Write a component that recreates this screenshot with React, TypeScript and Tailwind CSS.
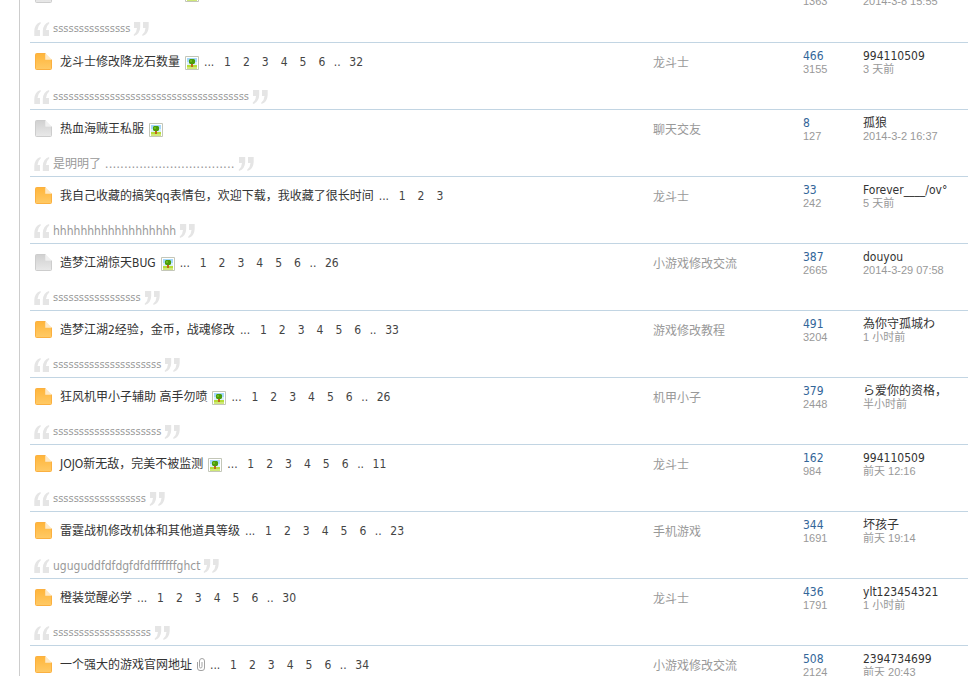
import React from "react";

type Thread = {
  title: string;
  isNew?: boolean;
  attachment?: "image" | "file";
  pages?: number[];
  excerpt: string;
  forum: string;
  replies: string;
  views: string;
  author: string;
  time: string;
};

const s = (count: number) => "s".repeat(count);
const upTo = (last: number) => [1, 2, 3, 4, 5, 6, last];

const threads: Thread[] = [
  { title: "", attachment: "image", excerpt: s(15), forum: "龙斗士", replies: "", views: "1363", author: "", time: "2014-3-8 15:55" },
  { title: "龙斗士修改降龙石数量", isNew: true, attachment: "image", pages: upTo(32), excerpt: s(38), forum: "龙斗士", replies: "466", views: "3155", author: "994110509", time: "3 天前" },
  { title: "热血海贼王私服", attachment: "image", excerpt: "是明明了 " + ".".repeat(34), forum: "聊天交友", replies: "8", views: "127", author: "孤狼", time: "2014-3-2 16:37" },
  { title: "我自己收藏的搞笑qq表情包，欢迎下载，我收藏了很长时间", isNew: true, pages: [1, 2, 3], excerpt: "hhhhhhhhhhhhhhhhhh", forum: "龙斗士", replies: "33", views: "242", author: "Forever____/ov°", time: "5 天前" },
  { title: "造梦江湖惊天BUG", attachment: "image", pages: upTo(26), excerpt: s(17), forum: "小游戏修改交流", replies: "387", views: "2665", author: "douyou", time: "2014-3-29 07:58" },
  { title: "造梦江湖2经验，金币，战魂修改", isNew: true, pages: upTo(33), excerpt: s(21), forum: "游戏修改教程", replies: "491", views: "3204", author: "為你守孤城わ", time: "1 小时前" },
  { title: "狂风机甲小子辅助 高手勿喷", isNew: true, attachment: "image", pages: upTo(26), excerpt: s(21), forum: "机甲小子", replies: "379", views: "2448", author: "ら爱你的资格，", time: "半小时前" },
  { title: "JOJO新无敌，完美不被监测", isNew: true, attachment: "image", pages: upTo(11), excerpt: s(18), forum: "龙斗士", replies: "162", views: "984", author: "994110509", time: "前天 12:16" },
  { title: "雷霆战机修改机体和其他道具等级", isNew: true, pages: upTo(23), excerpt: "uguguddfdfdgfdfdfffffffghct", forum: "手机游戏", replies: "344", views: "1691", author: "坏孩子", time: "前天 19:14" },
  { title: "橙装觉醒必学", isNew: true, pages: upTo(30), excerpt: s(19), forum: "龙斗士", replies: "436", views: "1791", author: "ylt123454321", time: "1 小时前" },
  { title: "一个强大的游戏官网地址", isNew: true, attachment: "file", pages: upTo(34), excerpt: "", forum: "小游戏修改交流", replies: "508", views: "2124", author: "2394734699", time: "前天 20:43" },
];

function PageIcon({ isNew }: { isNew?: boolean }) {
  const id = isNew ? "sheet-new" : "sheet-old";
  const [top, bottom, edge, fold] = isNew
    ? ["#ffb53a", "#ffca66", "#fbb040", "#ffe9c4"]
    : ["#d0d0d0", "#e9e9e9", "#cdcdcd", "#f0f0f0"];
  return (
    <svg className="h-[17px] w-[17px] shrink-0" viewBox="0 0 17 17" aria-hidden="true">
      <defs>
        <linearGradient id={id} x1="0" y1="0" x2="0" y2="1">
          <stop offset="0" stopColor={top} />
          <stop offset="1" stopColor={bottom} />
        </linearGradient>
      </defs>
      <path d="M1.5 .5H10.5V6.5H16.5V15.5Q16.5 16.5 15.5 16.5H1.5Q.5 16.5 .5 15.5V1.5Q.5 .5 1.5 .5Z" fill={`url(#${id})`} stroke={edge} />
      <path d="M10.5 .5L16.5 6.5H10.5Z" fill={fold} stroke={fold} strokeWidth=".6" />
    </svg>
  );
}

function ImageIcon() {
  return (
    <svg className="h-[14px] w-[14px] shrink-0" viewBox="0 0 14 14" role="img" aria-label="图片附件">
      <path d="M.5 .5H13.5V13.5H.5Z" fill="#fff" stroke="#c3c6b8" />
      <path d="M2 2H12V9H2Z" fill="#a4d8fb" />
      <path d="M2 6H12V9H2Z" fill="#d9f0fb" />
      <path d="M2 9H12V12H2Z" fill="#b5dd36" />
      <path d="M2 11H12V13H2Z" fill="#cfe878" />
      <path d="M6 7H8V11H6Z" fill="#c0661a" />
      <path d="M5 3H9L10 4V7L9 8H5L4 7V4Z" fill="#4a9c0a" />
      <path d="M5 4H7V6H5Z" fill="#6cba1c" />
    </svg>
  );
}

function ClipIcon() {
  return (
    <svg className="h-[13px] w-[8px] shrink-0" viewBox="0 0 8 13" role="img" aria-label="附件" fill="none" stroke="#a3a3a3">
      <path d="M.5 4V10Q.5 12.5 3 12.5H5Q7.5 12.5 7.5 10V3Q7.5 .5 5 .5Q2.500 .5 2.500 3V8.500Q2.500 10 3.800 10Q5 10 5 8.500V4" />
    </svg>
  );
}

function QuoteMark({ closing }: { closing?: boolean }) {
  return (
    <svg className={closing ? "h-[14px] w-[16px] shrink-0 rotate-180" : "h-[14px] w-[16px] shrink-0"} viewBox="0 0 16 14" aria-hidden="true" fill="#e5e5e5">
      <path d="M6.500 0Q.5 2 .3 9V14H6V8H3.500Q3.600 4 6.800 1.200Z" />
      <path d="M15 0Q9 2 8.800 9V14H15V8H12Q12.100 4 15.300 1.200Z" />
    </svg>
  );
}

function excerptFont(text: string) {
  if (/^s+$/.test(text)) return "text-[11px]";
  if (/\.{6}/.test(text)) return "font-['DejaVu_Sans','Noto_Sans_CJK_SC',sans-serif]";
  return "text-[12px]";
}

function Pager({ pages }: { pages: number[] }) {
  return (
    <span className="flex text-[#444]">
      <span className="w-[14px]">...</span>
      {pages.map((page, i) => (
        <React.Fragment key={page}>
          {i === 6 && <span className="w-3 text-center">..</span>}
          <a href="#" className="px-[6px]">{page}</a>
        </React.Fragment>
      ))}
    </span>
  );
}

function Row({ thread }: { thread: Thread }) {
  return (
    <tr className="h-[67px] border-b border-[#c2d5e3] align-top">
      <td className="p-0">
        <div className="mt-[9px] flex h-5 items-center gap-[5px] pl-[5px] leading-5 whitespace-nowrap">
          <PageIcon isNew={thread.isNew} />
          {thread.title ? (
            <a href="#" className="ml-[3px] text-[#333]">{thread.title}</a>
          ) : (
            <span className="ml-[3px] w-[120px]" />
          )}
          {thread.attachment === "image" && <span className="pt-[2px]"><ImageIcon /></span>}
          {thread.attachment === "file" && <ClipIcon />}
          {thread.pages && <Pager pages={thread.pages} />}
        </div>
        <div className="mt-[17px] flex h-4 items-center gap-[3px] pl-1 leading-4 whitespace-nowrap text-[#999]">
          <QuoteMark />
          <span className={excerptFont(thread.excerpt)}>{thread.excerpt}</span>
          <QuoteMark closing />
        </div>
      </td>
      <td className="p-0">
        <a href="#" className="mt-[10px] block leading-5 text-[#999]">{thread.forum}</a>
      </td>
      <td className="p-0">
        <a href="#" className="mt-[6px] block h-[14px] leading-[14px] text-[#336699]">{thread.replies}</a>
        <span className="block font-['Liberation_Sans','Noto_Sans_CJK_SC',sans-serif] text-[11px] leading-[13px] text-[#999]">{thread.views}</span>
      </td>
      <td className="p-0 whitespace-nowrap">
        <a href="#" className="mt-[6px] block h-[14px] leading-[14px] text-[#333]">{thread.author}</a>
        <a href="#" className="block font-['Liberation_Sans','Noto_Sans_CJK_SC',sans-serif] text-[11px] leading-[13px] text-[#999]">{thread.time}</a>
      </td>
    </tr>
  );
}

export default function App() {
  return (
    <div className="h-screen overflow-hidden bg-white pl-[19px] font-['DejaVu_Sans_Condensed','Noto_Sans_CJK_SC',sans-serif] text-[12px]">
      <main className="flow-root min-h-full border-l border-[#cdcdcd] pr-[5px] pl-[10px]">
        <table className="-mt-[25px] w-full table-fixed border-collapse text-left">
          <colgroup>
            <col />
            <col className="w-[150px]" />
            <col className="w-[60px]" />
            <col className="w-[105px]" />
          </colgroup>
          <tbody>
            {threads.map((thread, i) => (
              <Row key={i} thread={thread} />
            ))}
          </tbody>
        </table>
      </main>
    </div>
  );
}
